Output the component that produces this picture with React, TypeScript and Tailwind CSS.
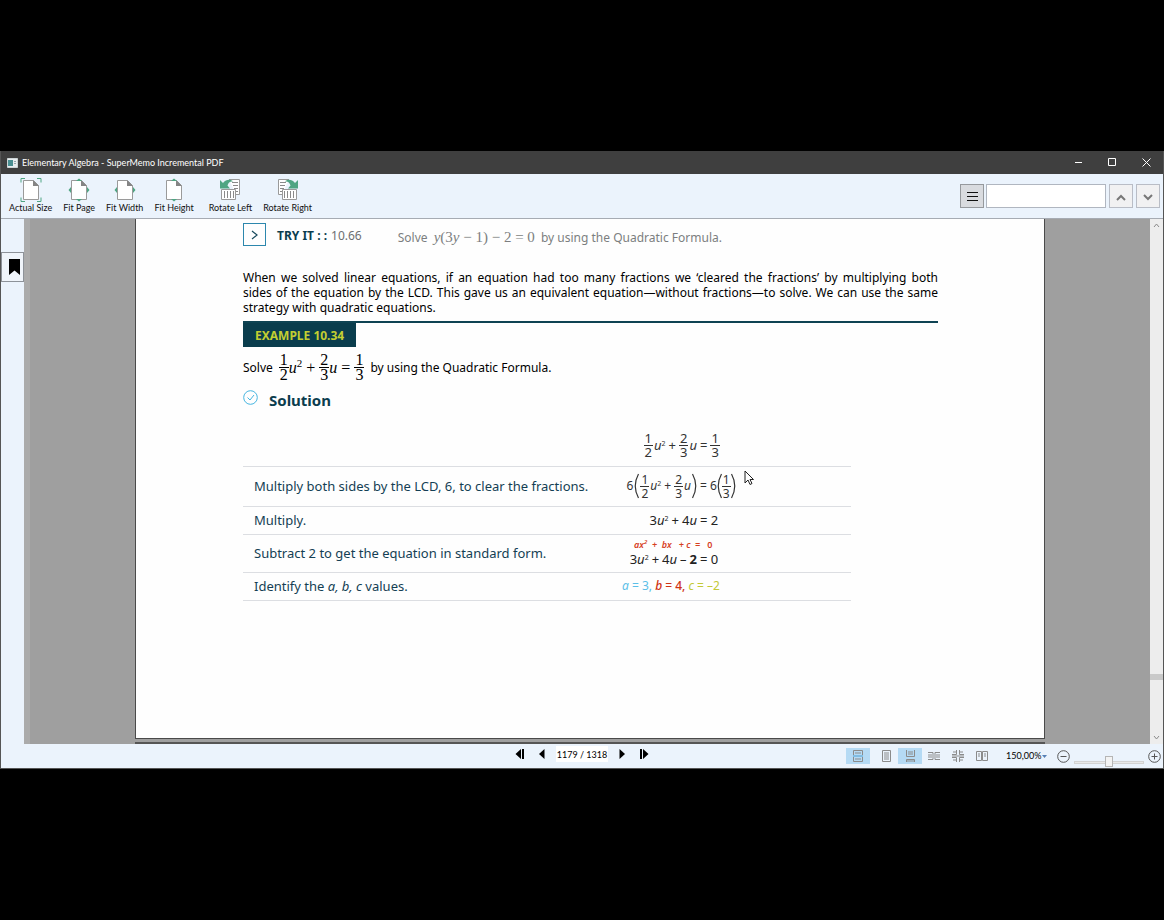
import type { ReactNode } from "react";

const UI = "font-['Lato','Open_Sans',sans-serif]";
const DOC = "font-['Noto_Sans',sans-serif]";
const MATH = "font-['Liberation_Serif',serif]";

function Frac({ top, bottom, large }: { top: string; bottom: string; large?: boolean }) {
  return (
    <span className={`inline-flex flex-col items-center align-middle ${large ? "leading-[14px]" : "leading-[13px]"}`}>
      <span className="border-b border-current px-px">{top}</span>
      <span className="px-px">{bottom}</span>
    </span>
  );
}

function PageShape({ arrows }: { arrows: "corners" | "all" | "x" | "y" }) {
  const horizontal = arrows === "all" || arrows === "x";
  const vertical = arrows === "all" || arrows === "y";
  return (
    <svg width="22" height="24" viewBox="0 0 22 24" aria-hidden="true">
      <path d="M3.500 2.500h10l5 5v14h-15z" fill="#fff" stroke="#9a9a9a" />
      <path d="M13 2l6 6h-6z" fill="#858585" />
      {arrows === "corners" && (
        <path
          d="M1 4.500V.5h4M17 .5h4v4M21 19.500v4h-4M5 23.500H1v-4"
          fill="none"
          stroke="#4fa583"
        />
      )}
      {horizontal && <path d="M3 9v6L.5 12zM19 9v6l2.500-3z" fill="#4fa583" />}
      {vertical && <path d="M8 3l3-2.500L14 3zM8 21h6l-3 2.500z" fill="#4fa583" />}
    </svg>
  );
}

function RotateShape({ right }: { right?: boolean }) {
  return (
    <svg
      width="22"
      height="24"
      viewBox="0 0 22 24"
      aria-hidden="true"
      className={right ? "-scale-x-100" : ""}
    >
      <path d="M10 1.500h10.500v15H17" fill="#fff" stroke="#9a9a9a" />
      <path d="M13 4.500h6M14 7.500h5M15 10.500h4M17 13.500h2" stroke="#8a8a8a" />
      <path d="M2.500 11.500h14v10h-14z" fill="#fff" stroke="#9a9a9a" />
      <path d="M5.500 13v7M8.500 13v7M11.500 13v7M14.500 13v7" stroke="#8a8a8a" />
      <path d="M1 2l3 3c3-4 8-4 10-1.500-3-.5-4.500 1-5.500 4L11 10.500H1z" fill="#4fa583" />
    </svg>
  );
}

function Tool({ icon, label }: { icon: ReactNode; label: string }) {
  return (
    <button type="button" className="flex flex-col items-center">
      {icon}
      <span className="whitespace-nowrap leading-3">{label}</span>
    </button>
  );
}

function ViewButton({ label, active, children }: { label: string; active?: boolean; children: ReactNode }) {
  return (
    <button
      type="button"
      aria-label={label}
      aria-pressed={!!active}
      className={`flex h-4 w-6 items-center justify-center ${active ? "bg-[#b5daf4]" : ""}`}
    >
      <svg width="14" height="12" viewBox="0 0 14 12" fill="none" stroke="#8b8b8b" aria-hidden="true">
        {children}
      </svg>
    </button>
  );
}

function Equation({ left, right }: { left: ReactNode; right: ReactNode }) {
  return (
    <div className="flex items-center">
      <span className="flex w-[75px] items-center justify-end gap-[3px] whitespace-nowrap">{left}</span>
      <span className="flex items-center gap-[3px] whitespace-nowrap pl-[3px]">= {right}</span>
    </div>
  );
}

function USquared({ coefficient }: { coefficient?: string }) {
  return (
    <span>
      {coefficient}
      <i>u</i>
      <sup className="-top-1 text-[7px]">2</sup>
    </span>
  );
}

function Paren({ close }: { close?: boolean }) {
  return (
    <svg width="5" height="26" viewBox="0 0 5 26" fill="none" stroke="#333" className={close ? "-scale-x-100" : ""}>
      <path d="M4.500 1Q-2 13 4.500 25" strokeWidth="1.200" />
    </svg>
  );
}

function TitleBar() {
  return (
    <header className="flex h-[23px] shrink-0 items-center bg-[#3f3f3f] pl-1.5 text-white">
      <svg width="11" height="10" viewBox="0 0 11 10" aria-hidden="true">
        <path d="M.5.5h10v9H.5z" fill="#e8eef0" stroke="#ccd4d6" />
        <path d="M1 2h5v6H1z" fill="#4a8f92" />
        <path d="M7 3h2v1H7zM7 5h2v1H7z" fill="#97a6ab" />
      </svg>
      <h1 className="ml-1 text-[9px]">Elementary Algebra - SuperMemo Incremental PDF</h1>
      <div className="ml-auto flex">
        <button type="button" aria-label="Minimize" className="flex w-[34px] justify-center">
          <svg width="9" height="9" viewBox="0 0 9 9" stroke="#fff"><path d="M1 4.500h7" /></svg>
        </button>
        <button type="button" aria-label="Maximize" className="flex w-[34px] justify-center">
          <svg width="9" height="9" viewBox="0 0 9 9" stroke="#fff" fill="none"><path d="M.5.5h7v7h-7z" /></svg>
        </button>
        <button type="button" aria-label="Close" className="flex w-[34px] justify-center">
          <svg width="9" height="9" viewBox="0 0 9 9" stroke="#fff"><path d="M.5.500l8 8M8.500.500l-8 8" /></svg>
        </button>
      </div>
    </header>
  );
}

function Toolbar() {
  return (
    <div className="flex h-[45px] shrink-0 items-center justify-between border-b border-[#a6abb3] bg-[#ebf3fc] pl-2 pr-[3px] text-[9px] text-[#111]">
      <div className="flex gap-[11px]">
        <Tool icon={<PageShape arrows="corners" />} label="Actual Size" />
        <Tool icon={<PageShape arrows="all" />} label="Fit Page" />
        <Tool icon={<PageShape arrows="x" />} label="Fit Width" />
        <Tool icon={<PageShape arrows="y" />} label="Fit Height" />
        <span className="flex gap-[11px] pl-1">
          <Tool icon={<RotateShape />} label="Rotate Left" />
          <Tool icon={<RotateShape right />} label="Rotate Right" />
        </span>
      </div>
      <div className="flex">
        <button type="button" aria-label="Search options" className="flex size-6 items-center justify-center border border-[#96999d] bg-[#d9dbdf]">
          <svg width="11" height="9" viewBox="0 0 11 9" stroke="#111"><path d="M0 .5h11M0 4.500h11M0 8.500h11" /></svg>
        </button>
        <input aria-label="Search" className="ml-0.5 h-6 w-[120px] border border-[#b0b6c0] bg-white px-1 outline-none" />
        <button type="button" aria-label="Previous result" className="ml-[3px] flex size-6 items-center justify-center border border-[#b9bdc6] bg-[#f1f1f2] pt-0.5">
          <svg width="10" height="7" viewBox="0 0 10 7" fill="none" stroke="#777" strokeWidth="2"><path d="M1 6l4-4 4 4" /></svg>
        </button>
        <button type="button" aria-label="Next result" className="ml-[3px] flex size-6 items-center justify-center border border-[#b9bdc6] bg-[#f1f1f2] pt-0.5">
          <svg width="10" height="7" viewBox="0 0 10 7" fill="none" stroke="#777" strokeWidth="2"><path d="M1 1l4 4 4-4" /></svg>
        </button>
      </div>
    </div>
  );
}

function Worksheet() {
  return (
    <table className="mt-[15px] w-[608px] border-collapse text-[13px] leading-4 text-[#143f54] [&_td]:border-b [&_td]:border-[#dcdee2] [&_td]:p-0">
      <tbody>
        <tr className="h-[41px]">
          <td className="w-[367px]" />
          <td className="text-[#333]">
            <div className="pl-3">
              <Equation
                left={<><span className="flex items-center gap-px"><Frac top="1" bottom="2" /><USquared /></span> + <span className="flex items-center gap-px"><Frac top="2" bottom="3" /><i>u</i></span></>}
                right={<Frac top="1" bottom="3" />}
              />
            </div>
          </td>
        </tr>
        <tr className="h-10">
          <td><p className="pl-[11px]">Multiply both sides by the LCD, 6, to clear the fractions.</p></td>
          <td className="text-[12px] text-[#333]">
            <div className="pl-3">
              <Equation
                left={<><span className="flex items-center gap-px">6<Paren /><Frac top="1" bottom="2" /><USquared /></span> + <span className="flex items-center gap-px"><Frac top="2" bottom="3" /><i>u</i><Paren close /></span></>}
                right={<span className="flex items-center">6<Paren /><Frac top="1" bottom="3" /><Paren close /></span>}
              />
            </div>
          </td>
        </tr>
        <tr className="h-7">
          <td><p className="pl-[11px]">Multiply.</p></td>
          <td className="text-[#222]">
            <div className="pl-3">
              <Equation left={<><USquared coefficient="3" /> + <span>4<i>u</i></span></>} right="2" />
            </div>
          </td>
        </tr>
        <tr className="h-[38px]">
          <td><p className="pl-[11px]">Subtract 2 to get the equation in standard form.</p></td>
          <td className="text-[#222]">
            <div className="pl-3">
              <div className="whitespace-nowrap pl-3 text-[9px] font-semibold italic leading-3 text-[#d6401f]">
                ax<sup className="-top-1 text-[6px]">2</sup>&nbsp; + &nbsp;bx &nbsp;&nbsp;+ c &nbsp;= &nbsp;&nbsp;<span className="not-italic">0</span>
              </div>
              <Equation left={<><USquared coefficient="3" /> + <span>4<i>u</i></span> – <b>2</b></>} right="0" />
            </div>
          </td>
        </tr>
        <tr className="h-7">
          <td><p className="pl-[11px]">Identify the <i>a, b, c</i> values.</p></td>
          <td className="text-[12px]">
            <p className="pl-3">
              <span className="text-[#5bbfe8]"><i>a</i> = 3,</span>{" "}
              <span className="font-medium text-[#cf3415]"><i>b</i> = 4,</span>{" "}
              <span className="text-[#c3c935]"><i>c</i> = –2</span>
            </p>
          </td>
        </tr>
      </tbody>
    </table>
  );
}

function Sheet() {
  return (
    <article className={`${DOC} relative min-h-0 w-full max-w-[910px] flex-1 overflow-hidden border-x border-b border-[#4a4a4a] bg-[#fefefe] pl-[107px] pr-[106px] pt-1 text-black`}>
      <div className="flex items-center text-[12px] leading-4">
        <span className="flex size-[23px] items-center justify-center border border-[#2c87ad]">
          <svg width="7" height="10" viewBox="0 0 7 10" fill="none" stroke="#17495c" strokeWidth="1.200"><path d="M1 1l5 4-5 4" /></svg>
        </span>
        <h2 className="ml-[11px] pt-0.5 font-bold text-[#0b3d4e]">TRY IT : :</h2>
        <span className="ml-1 pt-0.5 text-[#6d6f72]">10.66</span>
        <p className="ml-9 pt-1.5 text-[#7c7e80]">
          Solve <span className={`${MATH} mr-[3px] ml-[3px] text-[15px]`}><i>y</i>(3<i>y</i> − 1) − 2 = 0</span> by using the Quadratic Formula.
        </p>
      </div>
      <p className="mt-6 text-justify text-[12px] leading-[15px]">
        When we solved linear equations, if an equation had too many fractions we ‘cleared the fractions’ by multiplying
        both sides{"\u00a0"}of the equation by the LCD. This gave us an equivalent equation—without fractions—to solve. We
        can use the same strategy with quadratic equations.
      </p>
      <div className="mt-1.5 flex border-t-2 border-[#0e4353]">
        <h2 className="bg-[#0a3d4d] px-3 pb-[3px] pt-[5px] text-[12px] font-bold leading-4 text-[#c3cf31]">EXAMPLE 10.34</h2>
      </div>
      <p className="mt-1.5 flex items-center gap-1.5 text-[12px]">
        Solve
        <span className={`${MATH} flex items-center gap-1 text-[16px]`}>
          <span className="flex items-center">
            <Frac top="1" bottom="2" large />
            <span><i>u</i><sup className="text-[11px]">2</sup></span>
          </span>
          +
          <span className="flex items-center">
            <Frac top="2" bottom="3" large />
            <i>u</i>
          </span>
          =
          <Frac top="1" bottom="3" large />
        </span>
        by using the Quadratic Formula.
      </p>
      <div className="mt-2 flex items-start gap-[11px]">
        <svg width="15" height="15" viewBox="0 0 15 15" fill="none" stroke="#45b5e0"><circle cx="7.500" cy="7.500" r="6.800" /><path d="M4.500 7.500l2.500 2.500 4-5" /></svg>
        <h3 className="text-[15px] font-bold leading-5 text-[#0b3d4e]">Solution</h3>
      </div>
      <Worksheet />
      <svg width="10" height="16" viewBox="0 0 10 16" className="absolute left-[608px] top-[251px]" aria-hidden="true">
        <path d="M1 1v12l3-3 2 4.500 2-1-2-4h3.500z" fill="#fff" stroke="#222" />
      </svg>
    </article>
  );
}

function StatusBar() {
  return (
    <footer className="grid h-6 shrink-0 grid-cols-[1fr_auto_1fr] items-center bg-[#ebf3fc] text-[9px] text-black">
      <span />
      <nav aria-label="Pages" className="flex items-center pb-1">
        <button type="button" aria-label="First page" className="flex w-6 justify-center">
          <svg width="10" height="10" viewBox="0 0 10 10"><path d="M6 0v10L.5 5zM7 0h2v10H7z" /></svg>
        </button>
        <button type="button" aria-label="Previous page" className="flex w-5 justify-center">
          <svg width="6" height="10" viewBox="0 0 6 10"><path d="M5.500 0v10L0 5z" /></svg>
        </button>
        <input aria-label="Page" defaultValue="1179 / 1318" className="mx-1 h-4 w-[52px] bg-white text-center outline-none" />
        <button type="button" aria-label="Next page" className="flex w-5 justify-center">
          <svg width="6" height="10" viewBox="0 0 6 10"><path d="M.5 0v10L6 5z" /></svg>
        </button>
        <button type="button" aria-label="Last page" className="flex w-6 justify-center">
          <svg width="10" height="10" viewBox="0 0 10 10"><path d="M4 0v10L9.500 5zM1 0h2v10H1z" /></svg>
        </button>
      </nav>
      <div className="flex items-center justify-self-end pr-0.5">
        <span className="mr-1">
          <ViewButton label="Continuous scrolling" active><path d="M2.500 5V.5h9V5M2.500 7v4.500h9V7M4 3h6M4 9h6" /><path d="M2 6h10" stroke="#4c9ed0" /></ViewButton>
        </span>
        <ViewButton label="Single page"><path d="M3.500.5h8v11h-8zM5 3h5M5 5h5M5 7h5M5 9h5" /></ViewButton>
        <ViewButton label="Single page continuous" active><path d="M3.500 0v6.500h8V0M5 2h5M5 4h5M3.500 12V9.500h8V12" /><path d="M4 11h7" /></ViewButton>
        <ViewButton label="Two pages"><path d="M1 2.500h5v7H1M13 2.500H8v7h5M1 5h4M1 7h4M9 5h4M9 7h4" /></ViewButton>
        <ViewButton label="Two pages continuous"><path d="M5.500 0v4.500H1M8.500 0v4.500H13M1 7.500h4.500V12M13 7.500H8.500V12M2 2h3M9 2h3M2 10h3M9 10h3M1 6h12" /></ViewButton>
        <ViewButton label="Facing pages"><path d="M1.500 1.500h5v9h-5zM7.500 1.500h5v9h-5zM3 4h2M3 6h2M9 4h2M9 6h2" /></ViewButton>
        <select aria-label="Zoom level" defaultValue="150" className="ml-3 w-9 appearance-none bg-transparent outline-none">
          <option value="150">150,00%</option>
        </select>
        <svg width="5" height="3" viewBox="0 0 5 3" aria-hidden="true"><path d="M0 0h5L2.500 3z" fill="#557fb5" /></svg>
        <button type="button" aria-label="Zoom out" className="ml-[10px]">
          <svg width="13" height="13" viewBox="0 0 13 13" fill="none" stroke="#555"><circle cx="6.500" cy="6.500" r="5.800" /><path d="M3.500 6.500h6" /></svg>
        </button>
        <input
          type="range"
          aria-label="Zoom"
          className="mx-1 mt-3 h-3 w-[70px] appearance-none bg-transparent [&::-webkit-slider-runnable-track]:h-[3px] [&::-webkit-slider-runnable-track]:border [&::-webkit-slider-runnable-track]:border-[#d3d3d3] [&::-webkit-slider-runnable-track]:bg-[#e9e9e9] [&::-webkit-slider-thumb]:-mt-[6px] [&::-webkit-slider-thumb]:h-[11px] [&::-webkit-slider-thumb]:w-2 [&::-webkit-slider-thumb]:appearance-none [&::-webkit-slider-thumb]:border [&::-webkit-slider-thumb]:border-[#b5b5b5] [&::-webkit-slider-thumb]:bg-[#f3f3f3]"
        />
        <button type="button" aria-label="Zoom in">
          <svg width="13" height="13" viewBox="0 0 13 13" fill="none" stroke="#555"><circle cx="6.500" cy="6.500" r="5.800" /><path d="M3.500 6.500h6M6.500 3.500v6" /></svg>
        </button>
      </div>
    </footer>
  );
}

export default function App() {
  return (
    <div className="flex h-screen min-h-[640px] flex-col bg-black py-[151px]">
      <main className={`${UI} flex min-h-0 flex-1 flex-col border border-t-0 border-[#555]`}>
        <TitleBar />
        <Toolbar />
        <div className="flex min-h-0 flex-1 bg-[#9f9f9f]">
          <aside className="w-[23px] shrink-0 bg-[#ebf3fc] pt-[33px]">
            <button type="button" aria-label="Bookmarks" className="flex h-[30px] w-full items-center justify-center border border-[#8d9299] bg-[#f0f5fb] pl-[3px]">
              <svg width="11" height="16" viewBox="0 0 11 16" aria-hidden="true"><path d="M0 0h11v16l-5.500-4.500L0 16z" /></svg>
            </button>
          </aside>
          <div className="w-[6px] shrink-0 bg-[#ababab]" />
          <section className="flex min-w-0 flex-1 flex-col items-center">
            <Sheet />
            <div className="mt-[3px] h-0.5 w-full max-w-[910px] bg-[#555]" />
          </section>
          <div className="flex w-[13px] shrink-0 flex-col items-center justify-between bg-[#ededed] py-1">
            <svg width="7" height="5" viewBox="0 0 7 5" fill="none" stroke="#8a8a8a"><path d="M1 4l2.500-3L6 4" /></svg>
            <span className="mt-auto mb-[55px] h-1.5 w-full bg-[#c9c9c9]" />
            <svg width="7" height="5" viewBox="0 0 7 5" fill="none" stroke="#8a8a8a"><path d="M1 1l2.500 3L6 1" /></svg>
          </div>
        </div>
        <StatusBar />
      </main>
    </div>
  );
}
